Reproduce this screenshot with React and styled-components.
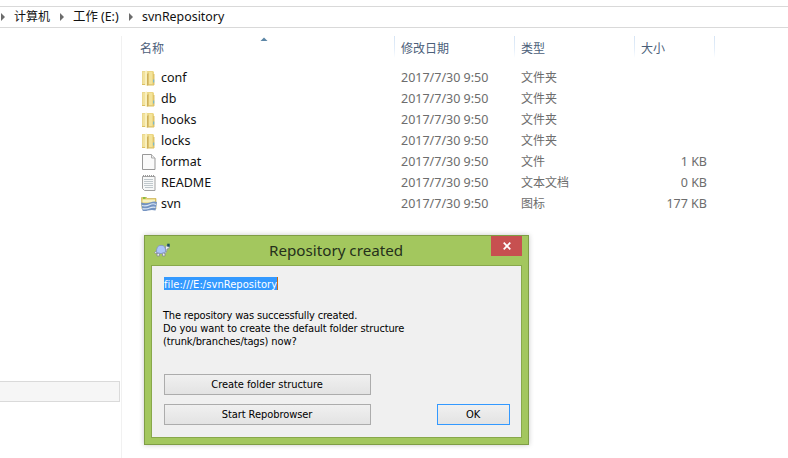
import React from 'react';
import styled, { createGlobalStyle, css } from 'styled-components';

const GlobalStyle = createGlobalStyle`
  * { box-sizing: border-box; }
  body { margin: 0; background: #fff; overflow: hidden; }
`;

const Window = styled.div`
  position: relative;
  width: 788px;
  height: 458px;
  display: flex;
  flex-direction: column;
  background: #fff;
  color: #111;
  font: 12.5px/21px "Noto Sans", "Noto Sans CJK SC", sans-serif;
  white-space: nowrap;
  overflow: hidden;
`;

const AddressBar = styled.nav`
  display: flex;
  align-items: center;
  height: 22px;
  margin-top: 6px;
  border-top: 1px solid #d9d9d9;
  border-bottom: 1px solid #d9d9d9;
`;

const Crumb = styled.span`
  width: ${(p) => p.$width}px;
  font-size: ${(p) => p.$size || 12.4}px;
  line-height: 20px;
`;

const CrumbArrow = styled.svg`
  flex: none;
  width: 4px;
  height: 8px;
  margin-left: ${(p) => p.$before}px;
  margin-right: ${(p) => p.$after}px;
  fill: #6c6c6c;
`;

const Body = styled.div`
  flex: 1;
  display: flex;
  padding-top: 8px;
`;

const Sidebar = styled.aside`
  width: 122px;
  padding-top: 345px;
  border-right: 1px solid #f1f1f1;
`;

const SidebarSelection = styled.div`
  width: 120px;
  height: 21px;
  background: #f6f6f6;
  border: 1px solid #dadada;
  border-left: 0;
`;

const FileList = styled.main`
  flex: 1;
`;

const HeaderRow = styled.div`
  display: flex;
  height: 22px;
  margin-bottom: 9px;
  color: #4c607a;
  font-size: 12px;
  line-height: 26px;
`;

const HeaderCell = styled.div`
  position: relative;
  width: ${(p) => p.$width}px;
  padding-left: ${(p) => p.$pad}px;
  background: linear-gradient(#d6e5f5, #e4eefa 60%, #fff) right / 1px 100% no-repeat;
`;

const SortArrow = styled.svg`
  position: absolute;
  left: 138px;
  top: 1px;
  width: 8px;
  height: 4px;
`;

const FileRow = styled.div`
  display: flex;
  align-items: center;
  height: 21px;
  padding-left: 18px;
`;

const FileIcon = styled.svg`
  flex: none;
  width: 18px;
  height: 18px;
  margin-right: 3px;
`;

const FileName = styled.span`
  width: 240px;
`;

const Meta = styled.span`
  width: ${(p) => p.$width}px;
  color: #6d6d6d;
  ${(p) => p.$cjk && css`font-size: 12px;`}
  ${(p) => p.$right && css`text-align: right;`}
`;

const Dialog = styled.section`
  position: absolute;
  left: 144px;
  top: 235px;
  width: 385px;
  height: 210px;
  display: flex;
  flex-direction: column;
  padding: 0 6px 6px;
  background: #a3c75e;
  border: 1px solid #7f9d45;
  box-shadow: 0 0 5px rgba(0, 0, 0, 0.22);
`;

const TitleBar = styled.header`
  display: flex;
  height: 29px;
  padding-left: 2px;
`;

const TurtleIcon = styled.svg`
  flex: none;
  width: 17px;
  height: 14px;
  margin-top: 7px;
`;

const Title = styled.h1`
  flex: 1;
  margin: 0;
  padding-left: 99px;
  color: #25301b;
  font-size: 15.2px;
  font-weight: 400;
  line-height: 28px;
`;

const CloseButton = styled.button`
  display: flex;
  align-items: center;
  justify-content: center;
  width: 31px;
  height: 20px;
  padding: 0;
  border: 0;
  background: #c75050;
`;

const Content = styled.div`
  flex: 1;
  padding: 11px 11px 0 11px;
  background: #f0f0f0;
  border: 1px solid #88a84b;
  color: #000;
  font: 11px/13px "DejaVu Sans Condensed", "DejaVu Sans", sans-serif;
  font-stretch: condensed;
`;

const PathField = styled.div`
  width: 114px;
  height: 13px;
  margin-left: 1px;
  background: #3399ff;
  border-right: 1px solid #c66a18;
  color: #fff;
  line-height: 15px;
  letter-spacing: 0.08px;
`;

const Message = styled.p`
  margin: 19px 0 26px;
  height: 39px;
`;

const MessageLine = styled.span`
  display: block;
  letter-spacing: ${(p) => p.$spacing}px;
`;

const ButtonRow = styled.div`
  display: flex;
  justify-content: space-between;
  margin: 0 0 9px 1px;
`;

const Button = styled.button`
  width: ${(p) => p.$width}px;
  height: 21px;
  padding: 1px 1px 0 0;
  border: 1px solid ${(p) => (p.$primary ? '#3399ff' : '#acacac')};
  background: linear-gradient(#f0f0f0, #e3e3e3);
  color: #000;
  font: inherit;
  line-height: 18px;
  letter-spacing: -0.06px;
`;

const Arrow = ({ before, after }) => (
  <CrumbArrow viewBox="0 0 4 8" $before={before} $after={after}>
    <path d="M0 0 4 4 0 8z" />
  </CrumbArrow>
);

const FolderIcon = () => (
  <FileIcon viewBox="0 0 18 18">
    <path d="M2 2h6v14H2z" fill="#ead88e" />
    <path d="M3 3h3v12H3z" fill="#f2e29c" />
    <path d="M8 2h5l1 1v13H7z" fill="#ecd784" />
    <path d="M9 3h3v12H9z" fill="#f3e39a" />
    <path d="M2 15h5v1H2zM8 15.500h6v1H8z" fill="#dcc062" />
    <path d="M5 2 7 1.500V17l-2-1z" fill="#f9f0bd" />
    <path d="M7 5 8.500 4v12L7 17z" fill="#ceb05a" />
    <path d="M13 5h1.500v11H13z" fill="#dfc368" />
    <path d="M13 10.500h1.200v3H13z" fill="#79b9ca" />
  </FileIcon>
);

const PageIcon = () => (
  <FileIcon viewBox="0 0 18 18">
    <path d="M2.500 1.500h9l3.500 3.500v11.500h-12.500z" fill="#fafafa" stroke="#999" />
    <path d="M11.500 1.500v3.500H15" fill="#eee" stroke="#aaa" />
  </FileIcon>
);

const TextIcon = () => (
  <FileIcon viewBox="0 0 18 18">
    <path d="M2.500 2.500H15v14H4.500l-2-2z" fill="#f7f8f8" stroke="#a2a2a2" />
    <path d="M4 5.500h9M4 7.500h9M4 9.500h9M4 11.500h9M5 13.500h8" stroke="#c0c8cc" />
    <path d="M3 2h12" stroke="#9b9b9b" strokeWidth="2" strokeDasharray="1 1" />
  </FileIcon>
);

const SvnIcon = () => (
  <FileIcon viewBox="0 0 18 18">
    <path d="M1.500 4V2.500h5l1 1h8.500V14H2z" fill="#e5cf68" stroke="#c4a947" strokeWidth=".6" />
    <path d="M3 3h2.500" stroke="#62b932" strokeWidth="1.400" />
    <path d="M2.500 4.500h12.500V7.500h-12.500z" fill="#f6f1c3" />
    <path d="M1 7.500Q6 9 10 7.500t7-.5l-1.500 8.500Q12 14.500 8 15.500t-5.500 0z" fill="#7493c1" />
    <path d="M2 10.500Q6 11.500 9.500 9.700T16 9.500M2.500 13.700q4 .700 7-.7t6-.7" fill="none" stroke="#dbe8f7" strokeWidth="1.200" />
  </FileIcon>
);

const ICONS = { folder: FolderIcon, page: PageIcon, text: TextIcon, svn: SvnIcon };

const FILES = [
  ['folder', 'conf', '文件夹', ''],
  ['folder', 'db', '文件夹', ''],
  ['folder', 'hooks', '文件夹', ''],
  ['folder', 'locks', '文件夹', ''],
  ['page', 'format', '文件', '1 KB'],
  ['text', 'README', '文本文档', '0 KB'],
  ['svn', 'svn', '图标', '177 KB'],
];

export default function App() {
  return (
    <Window>
      <GlobalStyle />
      <AddressBar>
        <Arrow before={1} after={9} />
        <Crumb $width={36} $size={12}>计算机</Crumb>
        <Arrow before={10} after={9} />
        <Crumb $width={46}>工作 (E:)</Crumb>
        <Arrow before={10} after={9} />
        <Crumb $width={90}>svnRepository</Crumb>
      </AddressBar>
      <Body>
        <Sidebar>
          <SidebarSelection />
        </Sidebar>
        <FileList>
          <HeaderRow>
            <HeaderCell $width={273} $pad={18}>
              名称
              <SortArrow viewBox="0 0 8 4">
                <path d="M0.5 4 4 .5 7.5 4z" fill="#5c86a6" />
              </SortArrow>
            </HeaderCell>
            <HeaderCell $width={120} $pad={6}>修改日期</HeaderCell>
            <HeaderCell $width={120} $pad={6}>类型</HeaderCell>
            <HeaderCell $width={80} $pad={6}>大小</HeaderCell>
          </HeaderRow>
          {FILES.map(([kind, name, type, size]) => {
            const Icon = ICONS[kind];
            return (
              <FileRow key={name}>
                <Icon />
                <FileName>{name}</FileName>
                <Meta $width={120}>2017/7/30 9:50</Meta>
                <Meta $width={120} $cjk>{type}</Meta>
                <Meta $width={66} $right>{size}</Meta>
              </FileRow>
            );
          })}
        </FileList>
      </Body>
      <Dialog>
        <TitleBar>
          <TurtleIcon viewBox="0 0 17 14">
            <path d="M4 9.500h2.500v3.500H4zM9.500 9.500H12v3.500H9.500zM1.500 9.500l3-2.500 1 3.500H2.500z" fill="#eceef0" stroke="#858b94" strokeWidth=".8" />
            <path d="M11 8.500q2-1 1.500-4.500L14 2l2.500 1.500-.8 2-1.700.5q.3 4-3 5z" fill="#eceef0" stroke="#858b94" strokeWidth=".8" />
            <path d="M3.500 9.500Q3 2.500 8 2.300T12.500 9Q8 12 3.500 9.500z" fill="#abc5fa" stroke="#8496bd" strokeWidth=".9" />
            <path d="M14.200.700h2.500v3h-2.500z" fill="#1b4f60" />
          </TurtleIcon>
          <Title>Repository created</Title>
          <CloseButton aria-label="Close">
            <svg width="8" height="8" viewBox="0 0 8 8">
              <path d="M.7.7 7.300 7.300M7.300.7.7 7.300" stroke="#fff" strokeWidth="1.700" />
            </svg>
          </CloseButton>
        </TitleBar>
        <Content>
          <PathField>file:///E:/svnRepository</PathField>
          <Message>
            <MessageLine $spacing={-0.17}>The repository was successfully created.</MessageLine>
            <MessageLine $spacing={-0.12}>Do you want to create the default folder structure</MessageLine>
            <MessageLine $spacing={-0.11}>(trunk/branches/tags) now?</MessageLine>
          </Message>
          <ButtonRow>
            <Button $width={207}>Create folder structure</Button>
          </ButtonRow>
          <ButtonRow>
            <Button $width={207}>Start Repobrowser</Button>
            <Button $width={73} $primary>OK</Button>
          </ButtonRow>
        </Content>
      </Dialog>
    </Window>
  );
}
